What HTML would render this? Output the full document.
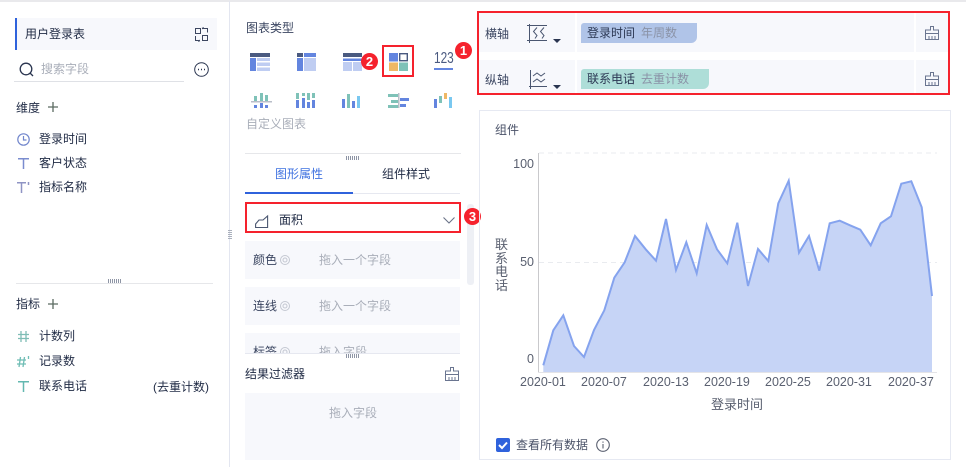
<!DOCTYPE html>
<html lang="zh">
<head>
<meta charset="utf-8">
<title>图表</title>
<style>
html,body{margin:0;padding:0;background:#fff}
#p{position:relative;width:966px;height:467px;overflow:hidden;background:#fff;font-family:"Liberation Sans","Noto Sans CJK SC",sans-serif;font-size:12px;color:#1f2a44}
.a{position:absolute}
.t{position:absolute;white-space:nowrap;line-height:16px;height:16px}
.g{color:#a9aeb9}
.box{position:absolute;background:#f7f8fc}
svg{position:absolute;overflow:visible}
.badge{position:absolute;width:17px;height:17px;border-radius:50%;background:#f5222d;color:#fff;font:bold 13px/17px "Liberation Sans",sans-serif;text-align:center}
.red{position:absolute;border:2px solid #f5222d;box-sizing:border-box}
</style>
</head>
<body>
<div id="p">
<div class="a" style="left:0;top:0;width:966px;height:1.5px;background:#e9e9ec"></div>
<div class="a" style="left:229px;top:1px;width:1px;height:466px;background:#e3e6f0"></div>

<!-- left panel -->
<div class="box" style="left:15px;top:18px;width:202px;height:32px;border-left:2px solid #2f62dc;box-sizing:border-box"></div>
<div class="t" style="left:25px;top:26px">用户登录表</div>
<svg style="left:195px;top:28px" width="13" height="13" fill="none" stroke="#3c4660"><rect x=".5" y=".5" width="5" height="5"/><rect x="7.500" y="7.500" width="5" height="5"/><path d="M.5 8v4.500h3M8 .5h4.500v4"/><path d="M7 .5l2-.5M5 12.500l-2 .5" stroke-width="1.500"/></svg>
<svg style="left:19px;top:62px" width="16" height="16" fill="none" stroke="#2a3550" stroke-width="1.300"><circle cx="7" cy="7" r="5.800"/><path d="M11 11l3 3"/></svg>
<div class="t g" style="left:41px;top:61px">搜索字段</div>
<div class="a" style="left:14px;top:81px;width:170px;height:1px;background:#dfe1e6"></div>
<svg style="left:194px;top:62px" width="15" height="15" fill="none" stroke="#2a3550"><circle cx="7.500" cy="7.500" r="6.800"/><path d="M4 7.500h1M7 7.500h1M10 7.500h1" stroke-width="1.400"/></svg>

<div class="t" style="left:16px;top:100px">维度</div>
<svg style="left:48px;top:102px" width="10" height="10" stroke="#5a6a60" stroke-width="1.300"><path d="M5 0v10M0 5h10"/></svg>
<svg style="left:17px;top:133px" width="13" height="13" fill="none" stroke="#7186cc" stroke-width="1.200"><circle cx="6.500" cy="6.500" r="5.700"/><path d="M6.500 3v4h3"/></svg>
<div class="t" style="left:39px;top:131px">登录时间</div>
<svg style="left:18px;top:158px" width="11" height="11" fill="none" stroke="#7a8ccf" stroke-width="1.500"><path d="M0 .8h11M5.500 .8V11"/></svg>
<div class="t" style="left:39px;top:155px">客户状态</div>
<svg style="left:17px;top:182px" width="13" height="11" fill="none" stroke="#8f94c4" stroke-width="1.500"><path d="M0 .8h9M4.500 .8V11M11.500 0v3"/></svg>
<div class="t" style="left:39px;top:179px">指标名称</div>

<div class="a" style="left:108px;top:279px;width:13px;height:4px;background:repeating-linear-gradient(90deg,#8e95a5 0 1px,transparent 1px 2px)"></div>
<div class="a" style="left:16px;top:283px;width:197px;height:1px;background:#e6e7ea"></div>
<div class="a" style="left:228px;top:229px;width:4px;height:10px;background:repeating-linear-gradient(0deg,#aab0bc 0 1px,transparent 1px 2px)"></div>
<div class="t" style="left:16px;top:296px">指标</div>
<svg style="left:48px;top:299px" width="10" height="10" stroke="#5a6a60" stroke-width="1.300"><path d="M5 0v10M0 5h10"/></svg>
<svg style="left:18px;top:331px" width="11" height="11" fill="none" stroke="#7fbdb5" stroke-width="1.300"><path d="M3 0v11M8 0v11M0 3.500h11M0 7.500h11"/></svg>
<div class="t" style="left:39px;top:328px">计数列</div>
<svg style="left:17px;top:356px" width="13" height="11" fill="none" stroke="#6fbdb5" stroke-width="1.300"><path d="M3.500 1L2 11M7.500 1L6 11M0 4h9M0 8h9M11.500 0v3"/></svg>
<div class="t" style="left:39px;top:353px">记录数</div>
<svg style="left:18px;top:381px" width="11" height="11" fill="none" stroke="#63b8b0" stroke-width="1.500"><path d="M0 .8h11M5.500 .8V11"/></svg>
<div class="t" style="left:39px;top:378px">联系电话</div>
<div class="t" style="left:153px;top:379px">(去重计数)</div>

<!-- chart types -->
<div class="t" style="left:246px;top:20px;color:#3a4560">图表类型</div>
<svg style="left:250px;top:53px" width="20" height="18"><rect width="20" height="4" fill="#4a5a80"/><rect y="5" width="6" height="13" fill="#6385df"/><rect x="7" y="5" width="13" height="3" fill="#bfcdf2"/><rect x="7" y="9.500" width="13" height="3.500" fill="#bfcdf2"/><rect x="7" y="14.500" width="13" height="3.500" fill="#bfcdf2"/></svg>
<svg style="left:297px;top:53px" width="19" height="18"><rect width="6" height="4" fill="#4a5a80"/><rect x="7" width="12" height="4" fill="#6385df"/><rect y="5" width="6" height="13" fill="#6385df"/><rect x="7" y="5" width="12" height="13" fill="#bfcdf2"/></svg>
<svg style="left:343px;top:53px" width="19" height="18"><rect width="19" height="4" fill="#4a5a80"/><rect y="5.500" width="19" height="2.500" fill="#6385df"/><rect y="9" width="9" height="9" fill="#bfcdf2"/><rect x="10" y="9" width="9" height="9" fill="#bfcdf2"/></svg>
<svg style="left:389px;top:53px" width="19" height="18"><rect width="9" height="8.500" fill="#6385df"/><rect x="10.700" y=".7" width="7.600" height="7" fill="#fff" stroke="#4a5a80" stroke-width="1.400"/><rect y="9.500" width="9" height="8.500" fill="#efb865"/><rect x="10" y="9.500" width="9" height="8.500" fill="#7fc2b8"/></svg>
<div class="a" style="left:383px;top:76px;width:30px;height:1px;background:#3c66d6"></div>
<div class="red" style="left:382px;top:45px;width:32px;height:32px"></div>
<div class="t" style="left:434px;top:51px;font-size:16px;color:#4a5a80;transform:scaleX(.74);transform-origin:0 0">123</div>
<div class="a" style="left:434px;top:68px;width:19px;height:2px;background:#6385df"></div>

<svg style="left:251px;top:93px" width="21" height="15"><rect x="3" y="3" width="3" height="5" fill="#7fc2b8"/><rect x="9" y="0" width="3" height="8" fill="#7fc2b8"/><rect x="14" y="2" width="3" height="6" fill="#7fc2b8"/><rect y="8" width="21" height="1.500" fill="#b9bec8"/><rect x="3" y="12" width="3" height="3" fill="#6385df"/><rect x="9" y="10" width="3" height="5" fill="#6385df"/><rect x="14" y="12" width="3" height="3" fill="#6385df"/></svg>
<svg style="left:296px;top:93px" width="20" height="15"><path d="M0 0h3v6H0zM6 0h3v3H6zM11 0h3v7h-3zM16 0h3v5h-3z" fill="#7fc2b8"/><path d="M0 7h3v8H0zM6 5h3v10H6zM11 9h3v6h-3zM16 7h3v8h-3z" fill="#6385df"/></svg>
<svg style="left:342px;top:93px" width="20" height="15"><rect y="6" width="3" height="9" fill="#6385df"/><rect x="5" y="1" width="3" height="14" fill="#7fc2b8"/><rect x="10" y="8" width="3" height="7" fill="#6385df"/><rect x="15" y="3" width="3" height="12" fill="#7ac8f0"/></svg>
<svg style="left:388px;top:93px" width="21" height="15"><rect x="0" y="1" width="10" height="3" fill="#7fc2b8"/><rect x="12" y="5" width="9" height="3" fill="#6385df"/><rect x="3" y="7" width="7" height="3" fill="#7fc2b8"/><rect x="0" y="12" width="10" height="3" fill="#7fc2b8"/><rect x="12" y="11" width="6" height="3" fill="#6385df"/><rect x="10" width="1.500" height="15" fill="#b9bec8"/></svg>
<svg style="left:434px;top:93px" width="19" height="15"><rect y="6" width="3" height="9" fill="#6385df"/><rect x="5" y="3" width="3" height="7" fill="#7fc2b8"/><rect x="10" y="0" width="3" height="6" fill="#efb865"/><rect x="15" y="4" width="3" height="11" fill="#7ac8f0"/></svg>
<div class="t g" style="left:246px;top:116px">自定义图表</div>

<div class="badge" style="left:361px;top:53px">2</div>
<div class="badge" style="left:455px;top:42px">1</div>

<div class="a" style="left:245px;top:153px;width:216px;height:1px;background:#e6e7ea"></div>
<div class="a" style="left:346px;top:156px;width:13px;height:4px;background:repeating-linear-gradient(90deg,#8e95a5 0 1px,transparent 1px 2px)"></div>
<div class="t" style="left:275px;top:166px;color:#3f72e0">图形属性</div>
<div class="t" style="left:382px;top:166px">组件样式</div>
<div class="a" style="left:245px;top:193px;width:215px;height:1px;background:#e6e8f0"></div>
<div class="a" style="left:245px;top:192px;width:108px;height:2px;background:#2f62dc"></div>

<div class="a" style="left:467px;top:204px;width:7px;height:81px;background:#eef0f5;border-radius:3px"></div>
<div class="red" style="left:245px;top:202px;width:216px;height:31px"></div>
<svg style="left:255px;top:215px" width="14" height="13" fill="none" stroke="#4a5670" stroke-width="1.100"><path d="M.6 12.500h12V1L8 5H4L.6 9z"/></svg>
<div class="t" style="left:279px;top:212px">面积</div>
<svg style="left:443px;top:217px" width="12" height="7" fill="none" stroke="#6a7388" stroke-width="1.100"><path d="M.5 .5L6 6l5.500-5.500"/></svg>
<div class="badge" style="left:464px;top:208px">3</div>

<div class="box" style="left:245px;top:241px;width:215px;height:38px"></div>
<div class="t" style="left:253px;top:252px;color:#3a4560">颜色</div>
<svg style="left:280px;top:255px" width="10" height="10" fill="none" stroke="#c4c8d2"><circle cx="5" cy="5" r="2"/><circle cx="5" cy="5" r="4.500"/></svg>
<div class="t g" style="left:319px;top:252px">拖入一个字段</div>
<div class="box" style="left:245px;top:287px;width:215px;height:38px"></div>
<div class="t" style="left:253px;top:298px;color:#3a4560">连线</div>
<svg style="left:280px;top:301px" width="10" height="10" fill="none" stroke="#c4c8d2"><circle cx="5" cy="5" r="2"/><circle cx="5" cy="5" r="4.500"/></svg>
<div class="t g" style="left:319px;top:298px">拖入一个字段</div>
<div class="box" style="left:245px;top:333px;width:215px;height:20px;overflow:hidden">
  <div class="t" style="left:8px;top:11px;color:#3a4560">标签</div>
  <svg style="left:35px;top:14px" width="10" height="10" fill="none" stroke="#c4c8d2"><circle cx="5" cy="5" r="2"/><circle cx="5" cy="5" r="4.500"/></svg>
  <div class="t g" style="left:74px;top:11px">拖入字段</div>
</div>
<div class="a" style="left:245px;top:353px;width:215px;height:1px;background:#e6e8f0"></div>
<div class="a" style="left:346px;top:354px;width:13px;height:4px;background:repeating-linear-gradient(90deg,#8e95a5 0 1px,transparent 1px 2px)"></div>
<div class="t" style="left:245px;top:366px">结果过滤器</div>
<svg style="left:445px;top:367px" width="14" height="14" fill="none" stroke="#6a7590"><path d="M5.500 .5h3V4h5v3.500H.5V4h5zM.5 7.500h13v6H.5z"/><path d="M4 10v3.500M7 10v3.500M10 10v3.500"/></svg>
<div class="box" style="left:245px;top:393px;width:215px;height:67px"></div>
<div class="t g" style="left:329px;top:405px">拖入字段</div>

<!-- axes -->
<div class="box" style="left:478px;top:13px;width:97px;height:39px"></div>
<div class="box" style="left:577px;top:13px;width:337px;height:39px"></div>
<div class="box" style="left:916px;top:13px;width:33px;height:39px"></div>
<div class="box" style="left:478px;top:60px;width:97px;height:35px"></div>
<div class="box" style="left:577px;top:60px;width:337px;height:35px"></div>
<div class="box" style="left:916px;top:60px;width:33px;height:35px"></div>
<div class="t" style="left:485px;top:26px;color:#3a4560">横轴</div>
<div class="t" style="left:485px;top:72px;color:#3a4560">纵轴</div>
<svg style="left:527px;top:24px" width="21" height="19" fill="none" stroke="#4a5670"><path d="M2.500 0v19M0 16.500h20M0 1.500h20"/><path d="M10 3.500L6.500 7.500l3.500 4-2 3M17 3.500l-3.500 4 3.500 4-2 3"/></svg>
<svg style="left:529px;top:70px" width="19" height="19" fill="none" stroke="#4a5670"><path d="M1.500 0v19M0 16.500h18"/><path d="M4 6l4-3 4 3 4-3M4 12l4-3 4 3 4-3"/></svg>
<svg style="left:553px;top:39px" width="8" height="4"><path d="M0 0h8L4 4z" fill="#2a3550"/></svg>
<svg style="left:553px;top:85px" width="8" height="4"><path d="M0 0h8L4 4z" fill="#2a3550"/></svg>
<div class="a" style="left:581px;top:23px;width:116px;height:20px;background:#b0c4e8;border-radius:3px 0 6px 0"></div>
<div class="t" style="left:587px;top:25px;color:#2c3854">登录时间</div>
<div class="t" style="left:641px;top:25px;color:#8a92a6">年周数</div>
<div class="a" style="left:581px;top:69px;width:128px;height:20px;background:#aeded8;border-radius:3px 0 6px 0"></div>
<div class="t" style="left:587px;top:71px;color:#2c3854">联系电话</div>
<div class="t" style="left:641px;top:71px;color:#8a92a6">去重计数</div>
<svg style="left:925px;top:26px" width="14" height="14" fill="none" stroke="#6a7590"><path d="M5.500 .5h3V4h5v3.500H.5V4h5zM.5 7.500h13v6H.5z"/><path d="M4 10v3.500M7 10v3.500M10 10v3.500"/></svg>
<svg style="left:925px;top:72px" width="14" height="14" fill="none" stroke="#6a7590"><path d="M5.500 .5h3V4h5v3.500H.5V4h5zM.5 7.500h13v6H.5z"/><path d="M4 10v3.500M7 10v3.500M10 10v3.500"/></svg>
<div class="red" style="left:477px;top:11px;width:473px;height:84px"></div>

<!-- component -->
<div class="a" style="left:479px;top:110px;width:472px;height:350px;border:1px solid #e6e9f2;box-sizing:border-box"></div>
<div class="t" style="left:495px;top:122px;color:#4a5268">组件</div>
<svg style="left:0;top:0" width="966" height="467">
<path d="M539 153H937M539 262.500H937" stroke="#e9ebef" stroke-dasharray="5 4" fill="none"/>
<path d="M543.300 372.500V365.300L553.300 330.300 563.300 315.300 574 346 584 357 594 330 604.300 310.300 614.300 277.700 624.700 262.300 635 236 645.700 249.300 656 260.700 666 219 676 270 686.300 242.300 696.700 273.300 706.700 225 717 249.300 727.300 263.300 737.300 222.700 748 286 758 249 768.300 261 778.300 203.300 788.700 180.700 799 252.700 809 236 819.300 270.700 829.700 223.300 839.700 220.700 850 225.300 860.300 229.700 870.700 245.300 880.700 223.300 891 216.300 901.300 183.700 911.300 181.300 921.700 207.300 932 296V372.500Z" fill="#c6d4f6"/>
<path d="M543.300 365.300L553.300 330.300 563.300 315.300 574 346 584 357 594 330 604.300 310.300 614.300 277.700 624.700 262.300 635 236 645.700 249.300 656 260.700 666 219 676 270 686.300 242.300 696.700 273.300 706.700 225 717 249.300 727.300 263.300 737.300 222.700 748 286 758 249 768.300 261 778.300 203.300 788.700 180.700 799 252.700 809 236 819.300 270.700 829.700 223.300 839.700 220.700 850 225.300 860.300 229.700 870.700 245.300 880.700 223.300 891 216.300 901.300 183.700 911.300 181.300 921.700 207.300 932 296" fill="none" stroke="#85a3ee" stroke-width="2"/>
<path d="M538.500 153V372.500" stroke="#c9c9cc" fill="none"/>
<path d="M538 372.500H937" stroke="#e4e4e8" fill="none"/>
</svg>
<div class="t" style="left:504px;top:156px;width:30px;text-align:right;font-size:12.500px;color:#5a6070">100</div>
<div class="t" style="left:504px;top:254px;width:30px;text-align:right;font-size:12.500px;color:#5a6070">50</div>
<div class="t" style="left:504px;top:351px;width:30px;text-align:right;font-size:12.500px;color:#5a6070">0</div>
<div class="a" style="left:495px;top:238px;width:13px;font-size:13px;line-height:13.500px;color:#5a6070">联系电话</div>
<div class="t" style="left:520px;top:374px;font-size:12.500px;color:#5a6070">2020-01</div>
<div class="t" style="left:581px;top:374px;font-size:12.500px;color:#5a6070">2020-07</div>
<div class="t" style="left:643px;top:374px;font-size:12.500px;color:#5a6070">2020-13</div>
<div class="t" style="left:704px;top:374px;font-size:12.500px;color:#5a6070">2020-19</div>
<div class="t" style="left:765px;top:374px;font-size:12.500px;color:#5a6070">2020-25</div>
<div class="t" style="left:826px;top:374px;font-size:12.500px;color:#5a6070">2020-31</div>
<div class="t" style="left:888px;top:374px;font-size:12.500px;color:#5a6070">2020-37</div>
<div class="t" style="left:711px;top:397px;font-size:13px;color:#5a6070">登录时间</div>
<div class="a" style="left:496px;top:438px;width:14px;height:14px;background:#2f62dc;border-radius:2px"></div>
<svg style="left:496px;top:438px" width="14" height="14" fill="none" stroke="#fff" stroke-width="2"><path d="M3 7l3 3 5-5.500"/></svg>
<div class="t" style="left:516px;top:437px;color:#4a5268">查看所有数据</div>
<svg style="left:596px;top:438px" width="14" height="14" fill="none" stroke="#5a6070" stroke-width="1.100"><circle cx="7" cy="7" r="6.300"/><path d="M7 6v4.500M7 3.500v1.300"/></svg>
</div>
</body>
</html>
